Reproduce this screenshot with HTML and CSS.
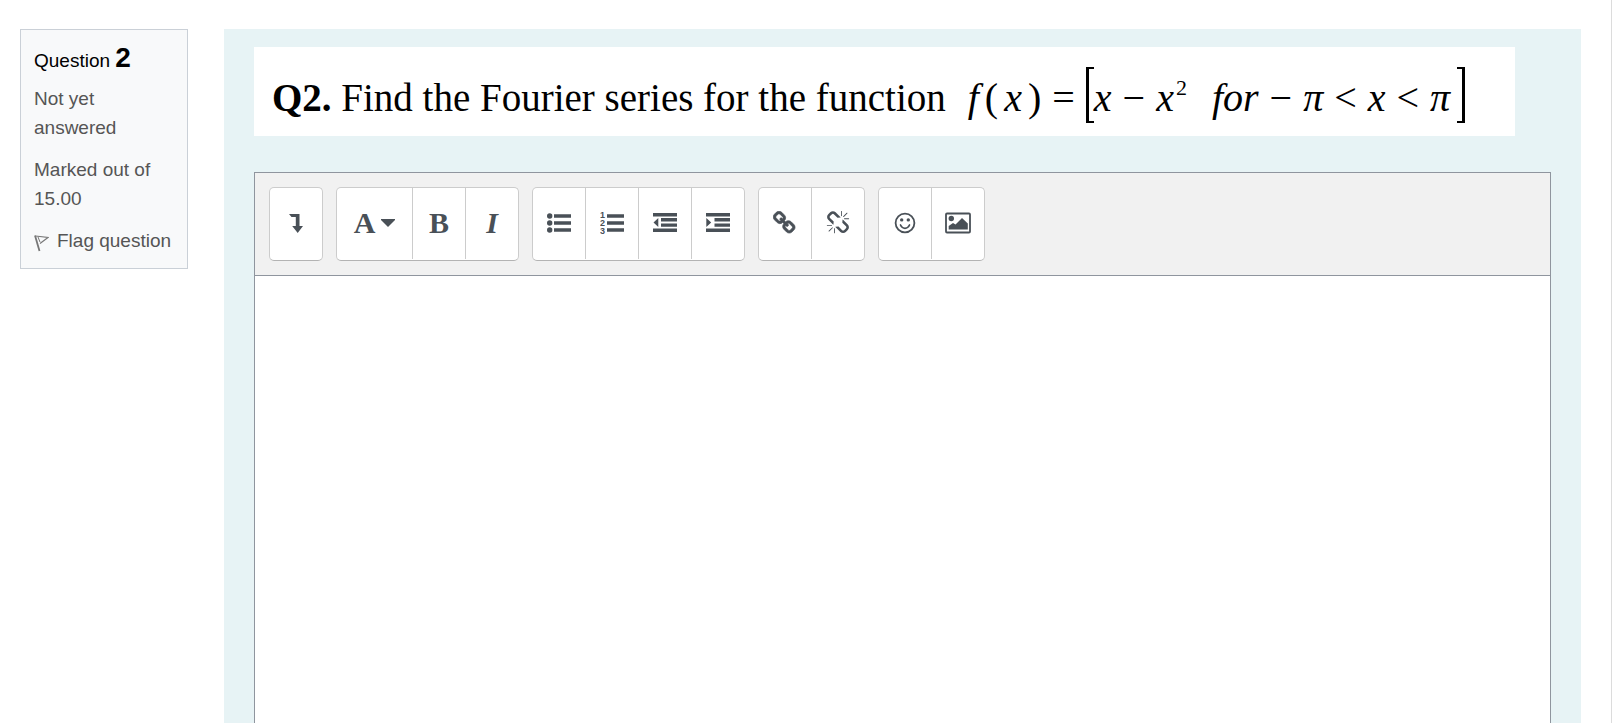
FILE: index.html
```html
<!DOCTYPE html>
<html lang="en">
<head>
    <meta charset="UTF-8">
    <meta name="viewport" content="width=device-width, initial-scale=1.0">
    <title>Question 2</title>
    <link rel="stylesheet" href="styles.css">
</head>
<body>
    <main class="page">
        <!-- Question info -->
        <aside class="info">
            <h3 class="info-title">Question <span class="qno">2</span></h3>
            <div class="info-text">Not yet answered</div>
            <div class="info-text">Marked out of 15.00</div>
            <a href="#" class="flag">
                <svg width="15" height="18" viewBox="0 0 15 18" fill="none" stroke="#777" aria-hidden="true">
                    <path d="M1 1.500L5.500 17" stroke-width="1.800"/>
                    <path d="M1.500 2L14 3.500L6 9.500" stroke-width="1.200"/>
                    <path d="M4 3L6 8" stroke-width="1"/>
                </svg>
                <span>Flag question</span>
            </a>
        </aside>

        <section class="content">
            <!-- Question text -->
            <div class="question">
                <p class="prompt"><b>Q2.</b> Find the Fourier series for the function</p>
                <div class="formula">
                    <span class="fx"><i>f</i><span>(</span><i>x</i><span>)</span></span>
                    <span class="op">=</span>
                    <span class="bracket left"></span>
                    <i>x</i>
                    <span class="op">−</span>
                    <span><i>x</i><sup>2</sup></span>
                    <i class="word">for</i>
                    <span class="op">−</span>
                    <i class="pi">π</i>
                    <span class="op">&lt;</span>
                    <i>x</i>
                    <span class="op">&lt;</span>
                    <i class="pi">π</i>
                    <span class="bracket right"></span>
                </div>
            </div>

            <!-- Answer editor -->
            <div class="editor">
                <div class="toolbar">
                    <div class="group">
                        <button type="button" aria-label="Show more buttons">
                            <svg width="14" height="19" viewBox="0 0 14 19"><path d="M0 0H10.500V12H14L8.700 19L3.200 12H6.800V3H2.500Z"/></svg>
                        </button>
                    </div>
                    <div class="group">
                        <button type="button" class="wide" aria-label="Paragraph styles">
                            <span class="letter">A</span>
                            <svg width="14" height="8" viewBox="0 0 14 8"><path d="M0 0H14V1L7 8L0 1Z"/></svg>
                        </button>
                        <button type="button" aria-label="Bold"><span class="letter">B</span></button>
                        <button type="button" aria-label="Italic"><span class="letter italic">I</span></button>
                    </div>
                    <div class="group">
                        <button type="button" aria-label="Unordered list">
                            <svg width="24" height="24" viewBox="0 0 24 24">
                                <circle cx="2.700" cy="5" r="2.700"/><circle cx="2.700" cy="12" r="2.700"/><circle cx="2.700" cy="19" r="2.700"/>
                                <path d="M7 3.300H24V6.700H7ZM7 10.300H24V13.700H7ZM7 17.300H24V20.700H7Z"/>
                            </svg>
                        </button>
                        <button type="button" aria-label="Ordered list">
                            <svg width="24" height="26" viewBox="0 -1 24 26">
                                <text class="digit" x="0" y="7">1</text><text class="digit" x="0" y="15">2</text><text class="digit" x="0" y="23">3</text>
                                <path d="M7 3.300H24V6.700H7ZM7 10.300H24V13.700H7ZM7 17.300H24V20.700H7Z"/>
                            </svg>
                        </button>
                        <button type="button" aria-label="Outdent">
                            <svg width="24" height="24" viewBox="0 0 24 24"><path d="M0 2H24V5.400H0ZM8 7H24V10.400H8ZM8 12.500H24V15.800H8ZM0 17.500H24V21H0ZM5.300 7V16L0.500 11.500Z"/></svg>
                        </button>
                        <button type="button" aria-label="Indent">
                            <svg width="24" height="24" viewBox="0 0 24 24"><path d="M0 2H24V5.400H0ZM8.500 7H24V10.400H8.500ZM8.500 12.500H24V15.800H8.500ZM0 17.500H24V21H0ZM0.300 7V16L5.200 11.500Z"/></svg>
                        </button>
                    </div>
                    <div class="group">
                        <button type="button" aria-label="Link">
                            <svg width="24" height="24" viewBox="0 0 1792 1792"><path stroke="#495057" stroke-width="50" d="M1456 1216q0-40-28-68l-208-208q-28-28-68-28-42 0-72 32 3 3 19 18.500t21.500 21.500 15 19 13 25.500 3.500 27.500q0 40-28 68t-68 28q-15 0-27.500-3.500t-25.500-13-19-15-21.500-21.500-18.500-19q-33 31-33 73 0 40 28 68l206 207q27 27 68 27 40 0 68-26l147-146q28-28 28-67zm-703-705q0-40-28-68l-206-207q-28-28-68-28-39 0-68 27l-147 146q-28 28-28 67 0 40 28 68l208 208q27 27 68 27 42 0 72-31-3-3-19-18.500t-21.500-21.500-15-19-13-25.500-3.500-27.500q0-40 28-68t68-28q15 0 27.500 3.500t25.500 13 19 15 21.500 21.500 18.500 19q33-31 33-73zm895 705q0 120-85 203l-147 146q-83 83-203 83-121 0-204-85l-206-207q-83-83-83-203 0-123 88-209l-88-88q-86 88-208 88-120 0-204-84l-208-208q-84-84-84-204t85-203l147-146q83-83 203-83 121 0 204 85l206 207q83 83 83 203 0 123-88 209l88 88q86-88 208-88 120 0 204 84l208 208q84 84 84 204z"/></svg>
                        </button>
                        <button type="button" aria-label="Unlink">
                            <svg width="24" height="24" viewBox="0 0 1792 1792"><path d="M503 1271l-256 256q-10 9-23 9-12 0-23-9-9-10-9-23t9-23l256-256q10-9 23-9t23 9q9 10 9 23t-9 23zm169 41v320q0 14-9 23t-23 9-23-9-9-23v-320q0-14 9-23t23-9 23 9 9 23zm-224-224q0 14-9 23t-23 9h-320q-14 0-23-9t-9-23 9-23 23-9h320q14 0 23 9t9 23zm1264 128q0 120-85 203l-147 146q-83 83-203 83-121 0-204-85l-334-335q-21-21-42-56l239-18 273 274q28 28 68 27.500t68-27.500l147-146q28-28 28-67 0-40-28-68l-274-275 18-239q35 21 56 42l336 336q84 86 84 204zm-617-724l-239 18-273-274q-28-28-68-28-39 0-68 27l-147 146q-28 28-28 67 0 40 28 68l274 274-18 240q-35-21-56-42l-336-336q-84-86-84-204 0-120 85-203l147-146q83-83 203-83 121 0 204 85l334 335q21 21 42 56zm633 84q0 14-9 23t-23 9h-320q-14 0-23-9t-9-23 9-23 23-9h320q14 0 23 9t9 23zm-544-544v320q0 14-9 23t-23 9-23-9-9-23v-320q0-14 9-23t23-9 23 9 9 23zm407 151l-256 256q-11 9-23 9t-23-9q-9-10-9-23t9-23l256-256q10-9 23-9t23 9q9 10 9 23t-9 23z"/></svg>
                        </button>
                    </div>
                    <div class="group">
                        <button type="button" aria-label="Emoji picker">
                            <svg width="24" height="24" viewBox="0 0 24 24">
                                <circle cx="12" cy="12" r="9.400" fill="none" stroke="#495057" stroke-width="1.800"/>
                                <circle cx="8.700" cy="8.900" r="1.700"/><circle cx="15.300" cy="8.900" r="1.700"/>
                                <path d="M7.500 14Q9 17.300 12 17.300T16.500 14" fill="none" stroke="#495057" stroke-width="1.700" stroke-linecap="round"/>
                            </svg>
                        </button>
                        <button type="button" aria-label="Insert image">
                            <svg width="26" height="24" viewBox="0 0 26 24">
                                <rect x="1" y="2.500" width="24" height="19" rx="1" fill="none" stroke="#495057" stroke-width="1.800"/>
                                <circle cx="6.300" cy="7.500" r="2.700"/>
                                <path d="M3.700 18.500V15L8 12L10.500 13.500L17 7L22.800 12.500V18.500Z"/>
                            </svg>
                        </button>
                    </div>
                </div>
                <textarea class="answer" aria-label="Answer text"></textarea>
            </div>
        </section>
    </main>
</body>
</html>
```
FILE: styles.css
```css
:root {
    --icon-color: #495057;
    --editor-border: #8f959e;
    --content-bg: #e7f3f5;
}

* {
    margin: 0;
    padding: 0;
    box-sizing: border-box;
}

body {
    background: #fff;
    font-family: "Liberation Sans", Arial, sans-serif;
    font-size: 19px;
    line-height: 29px;
    color: #555;
}

.page {
    display: grid;
    grid-template-columns: 168px 1fr;
    gap: 36px;
    min-height: 100vh;
    margin-right: 7px;
    padding: 29px 30px 0 20px;
    border-right: 1px solid #dcdcdc;
}

/* Question info */
.info {
    display: flex;
    flex-direction: column;
    gap: 13px;
    align-self: start;
    padding: 13px;
    background: #f8f9fa;
    border: 1px solid #cad0d7;
}

.info-title {
    height: 28px;
    font-size: 19px;
    font-weight: normal;
    line-height: 29px;
    color: #000;
}

.qno {
    font-size: 28px;
    font-weight: bold;
}

.flag {
    display: flex;
    align-items: center;
    gap: 8px;
    color: #555;
    text-decoration: none;
    white-space: nowrap;
}

.flag svg {
    flex: none;
    margin-top: 4px;
}

/* Question text */
.content {
    display: flex;
    flex-direction: column;
    gap: 36px;
    padding: 18px 30px 0;
    background: var(--content-bg);
}

.question {
    display: flex;
    align-items: center;
    align-self: flex-start;
    gap: 22px;
    min-height: 89px;
    padding: 12px 50px 0 18px;
    background: #fff;
    color: #000;
    font-family: "Liberation Serif", "Times New Roman", serif;
    font-size: 39px;
    line-height: 50px;
    white-space: nowrap;
}

.formula {
    display: flex;
    align-items: center;
    gap: 11px;
    font-size: 40px;
}

.formula sup {
    margin-left: 2px;
    font-size: 22px;
    line-height: 0;
    vertical-align: 16px;
}

.fx {
    display: flex;
    gap: 6px;
}

.bracket {
    width: 8px;
    height: 56px;
    margin-bottom: 6px;
    border: 3px solid #000;
    border-width: 2px 3px;
}

.left {
    margin-right: -11px;
    border-right: 0;
}

.right {
    margin-left: -4px;
    border-left: 0;
}

.word {
    margin-left: 14px;
}

/* Editor */
.editor {
    display: flex;
    flex: 1;
    flex-direction: column;
    border: 1px solid var(--editor-border);
    border-bottom: 0;
}

.toolbar {
    display: flex;
    flex-wrap: wrap;
    gap: 13px;
    padding: 14px;
    background: #f1f1f1;
    border-bottom: 1px solid var(--editor-border);
}

.group {
    display: flex;
    padding-bottom: 1px;
    background: #fff;
    border: 1px solid #ccc;
    border-bottom-color: #b3b3b3;
    border-radius: 5px;
}

.group button {
    display: flex;
    align-items: center;
    justify-content: center;
    gap: 6px;
    width: 52px;
    height: 71px;
    padding-bottom: 1px;
    background: none;
    border: 0;
    color: var(--icon-color);
    cursor: pointer;
}

.group button + button {
    width: 53px;
    border-left: 1px solid #ccc;
}

.group .wide {
    width: 75px;
}

.group svg {
    flex: none;
    fill: var(--icon-color);
}

.letter {
    font-family: "Liberation Serif", "Times New Roman", serif;
    font-size: 30px;
    font-weight: bold;
    line-height: 36px;
}

.italic {
    font-style: italic;
}

.digit {
    font-family: "Liberation Sans", Arial, sans-serif;
    font-size: 9px;
    font-weight: bold;
}

.answer {
    flex: 1;
    width: 100%;
    padding: 14px;
    background: #fff;
    border: 0;
    outline: 0;
    resize: none;
    font: inherit;
}
```
